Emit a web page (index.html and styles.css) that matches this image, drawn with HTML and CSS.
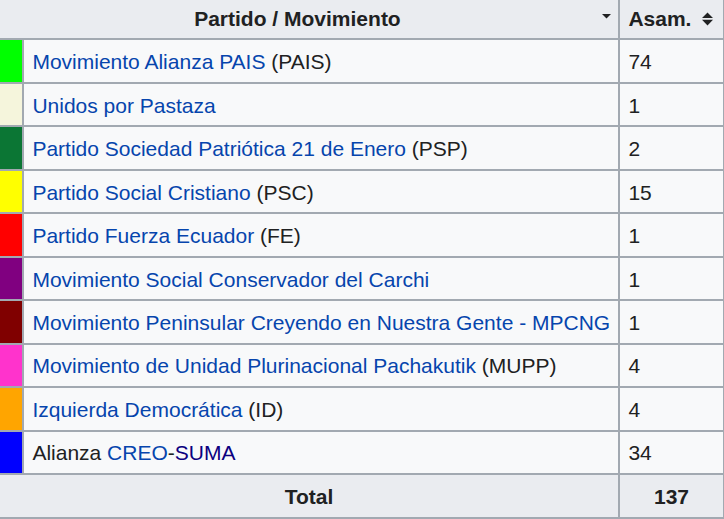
FILE: index.html
```html
<!DOCTYPE html>
<html lang="es">
<head>
<meta charset="utf-8">
<title>Asambleístas por partido</title>
<link rel="stylesheet" href="styles.css">
</head>
<body>
<table class="wikitable">
  <colgroup>
    <col class="col-color">
    <col class="col-name">
    <col class="col-seats">
  </colgroup>
  <thead>
    <tr>
      <th colspan="2" class="sortable sorted">Partido / Movimiento
        <svg class="sort-icon sort-down" width="9" height="5" viewBox="0 0 9 5" aria-hidden="true"><path d="M0 0H9L4.5 4.6Z" fill="#202122"/></svg>
      </th>
      <th class="sortable">Asam.
        <svg class="sort-icon sort-both" width="11" height="14" viewBox="0 0 11 14" aria-hidden="true"><path d="M0 6H11L5.5 0.4Z M0 7.8H11L5.5 13.4Z" fill="#202122"/></svg>
      </th>
    </tr>
  </thead>
  <tbody>
    <tr><td class="swatch" style="background:#00ff00"></td><td><a href="#">Movimiento Alianza PAIS</a> (PAIS)</td><td>74</td></tr>
    <tr><td class="swatch" style="background:#f5f5dc"></td><td><a href="#">Unidos por Pastaza</a></td><td>1</td></tr>
    <tr><td class="swatch" style="background:#0b7634"></td><td><a href="#">Partido Sociedad Patriótica 21 de Enero</a> (PSP)</td><td>2</td></tr>
    <tr><td class="swatch" style="background:#ffff00"></td><td><a href="#">Partido Social Cristiano</a> (PSC)</td><td>15</td></tr>
    <tr><td class="swatch" style="background:#ff0000"></td><td><a href="#">Partido Fuerza Ecuador</a> (FE)</td><td>1</td></tr>
    <tr><td class="swatch" style="background:#800080"></td><td><a href="#">Movimiento Social Conservador del Carchi</a></td><td>1</td></tr>
    <tr><td class="swatch" style="background:#800000"></td><td><a href="#">Movimiento Peninsular Creyendo en Nuestra Gente - MPCNG</a></td><td>1</td></tr>
    <tr><td class="swatch" style="background:#ff33cc"></td><td><a href="#">Movimiento de Unidad Plurinacional Pachakutik</a> (MUPP)</td><td>4</td></tr>
    <tr><td class="swatch" style="background:#ffa500"></td><td><a href="#">Izquierda Democrática</a> (ID)</td><td>4</td></tr>
    <tr><td class="swatch" style="background:#0000ff"></td><td>Alianza <a href="#">CREO</a>-<a href="#" class="visited">SUMA</a></td><td>34</td></tr>
  </tbody>
  <tfoot>
    <tr><th colspan="2">Total</th><th>137</th></tr>
  </tfoot>
</table>
</body>
</html>
```

FILE: styles.css
```css
html, body {
  margin: 0;
  padding: 0;
  overflow: hidden;
  background: #ffffff;
}

body {
  font-family: "Liberation Sans", Arial, sans-serif;
  font-size: 21px;
  color: #202122;
}

.wikitable {
  table-layout: fixed;
  width: 727px;
  margin: -5px 0 0 -2px;
  border-collapse: separate;
  border-spacing: 2px;
  background: #a2a9b1;
}

.col-color { width: 22px; }
.col-name { width: 594px; }
.col-seats { width: 103px; }

.wikitable th,
.wikitable td {
  padding: 4.6px 8.4px 3.3px;
  line-height: 33.6px;
  height: 33.6px;
  white-space: nowrap;
  box-sizing: content-box;
}

.wikitable td {
  background: #f8f9fa;
  text-align: left;
}

.wikitable th {
  background: #eaecf0;
  font-weight: bold;
  text-align: center;
}

.wikitable th.sortable {
  position: relative;
  padding-right: 31.5px;
}

.wikitable td.swatch {
  padding: 0;
}

.sort-icon {
  position: absolute;
  display: block;
}

.sort-down {
  right: 7.5px;
  top: 17px;
}

.sort-both {
  right: 10.5px;
  top: 14.5px;
}

a {
  color: #0645ad;
  text-decoration: none;
}

a.visited {
  color: #0b0080;
}
```
